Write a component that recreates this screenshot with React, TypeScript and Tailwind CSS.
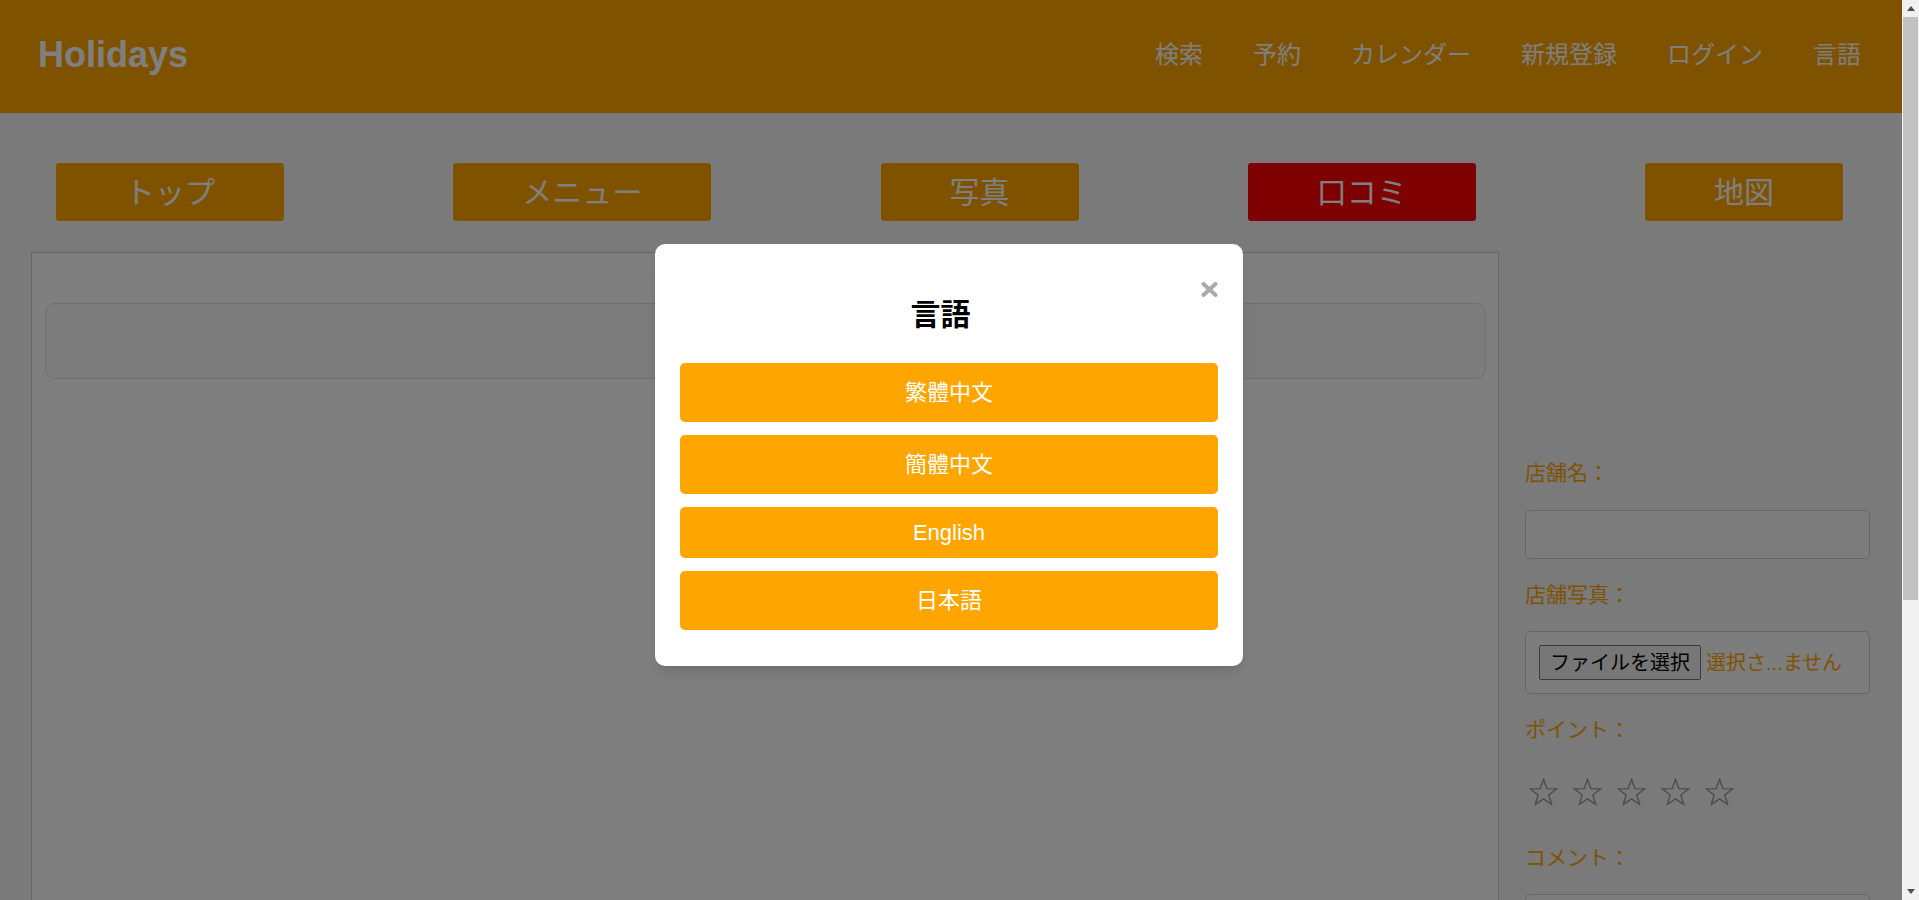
const navItems = ["検索", "予約", "カレンダー", "新規登録", "ログイン", "言語"];
const tabs = [
  { label: "トップ", active: false },
  { label: "メニュー", active: false },
  { label: "写真", active: false },
  { label: "口コミ", active: true },
  { label: "地図", active: false },
];
const languages = [
  { label: "繁體中文", h: "h-[59px]" },
  { label: "簡體中文", h: "h-[59px]" },
  { label: "English", h: "h-[51px]" },
  { label: "日本語", h: "h-[59px]" },
];

function Star() {
  return (
    <svg width="29" height="28" viewBox="0 0 29 28" fill="none">
      <polygon
        points="14.5,1.5 17.9,10.6 27.6,10.9 19.9,16.9 22.6,26.3 14.5,20.8 6.4,26.3 9.1,16.9 1.4,10.9 11.1,10.6"
        stroke="#999"
        strokeWidth="1.4"
        strokeLinejoin="miter"
      />
    </svg>
  );
}

function Label({ children, className = "" }: { children: React.ReactNode; className?: string }) {
  return <div className={`text-[21px] leading-[32px] h-[32px] pt-[2px] text-[#ffa500] ${className}`}>{children}</div>;
}

// drawn browser scrollbar, the page is taller than the window
function Scrollbar() {
  return (
    <div className="w-[17px] h-full bg-[#f1f1f1] flex flex-col items-center">
      <div className="h-[17px] w-full flex items-center justify-center">
        <svg width="8" height="5" viewBox="0 0 8 5"><polygon points="0,5 4,0 8,5" fill="#505050" /></svg>
      </div>
      <div className="w-[15px] h-[583px] bg-[#c1c1c1]" />
      <div className="flex-1" />
      <div className="h-[17px] w-full flex items-center justify-center">
        <svg width="8" height="5" viewBox="0 0 8 5"><polygon points="0,0 8,0 4,5" fill="#505050" /></svg>
      </div>
    </div>
  );
}

export default function App() {
  return (
    <div className="h-[900px] flex overflow-hidden font-['Liberation_Sans','Noto_Sans_CJK_JP',sans-serif]">
      <div className="relative flex-1 h-full overflow-hidden">
        <div className="min-h-[1340px] bg-[#f5f5f5]">
          {/* header */}
          <header className="h-[113px] bg-[#ffa500] flex items-center justify-between pl-[38px] pr-[41px] pb-[4px]">
            <h1 className="text-[36px] font-bold text-white leading-none">Holidays</h1>
            <nav className="flex gap-[50px] text-[24px] text-white">
              {navItems.map((n) => (
                <a key={n} className="cursor-pointer">{n}</a>
              ))}
            </nav>
          </header>

          {/* tabs */}
          <div className="flex justify-between pl-[56px] pr-[59px] pt-[50px]">
            {tabs.map((t) => (
              <button
                key={t.label}
                className={`h-[58px] px-[69px] rounded-[3px] text-[30px] text-white flex items-center justify-center ${
                  t.active ? "bg-[#ff0000]" : "bg-[#ffa500]"
                }`}
              >
                {t.label}
              </button>
            ))}
          </div>

          {/* main */}
          <div className="flex mt-[31px] pl-[31px] pb-[30px]">
            <div className="w-[1468px] h-[1058px] border border-[#cccccc] bg-white pl-[13px] pr-[12px] pt-[50px]">
              <div className="h-[76px] rounded-[10px] border border-[#e0e0e0] bg-[#f9f9f9]" />
            </div>

            <div className="flex-1 pl-[26px] pr-[32px] pt-[203px]">
              <Label>店舗名：</Label>
              <div className="mt-[23px] h-[49px] rounded-[5px] border border-[#cccccc] bg-[#fafafa]" />

              <Label className="mt-[18px]">店舗写真：</Label>
              <div className="mt-[22px] h-[63px] rounded-[5px] border border-[#cccccc] bg-[#fafafa] flex items-center pl-[13px]">
                <span className="h-[35px] px-[10px] flex items-center border border-[#767676] bg-[#efefef] rounded-[2px] text-[20px] text-black">
                  ファイルを選択
                </span>
                <span className="ml-[5px] text-[20px] text-[#ffa500]">選択さ...ません</span>
              </div>

              <Label className="mt-[18px]">ポイント：</Label>
              <div className="mt-[34px] flex gap-[15px] pl-[4px]">
                {[0, 1, 2, 3, 4].map((i) => (
                  <Star key={i} />
                ))}
              </div>

              <Label className="mt-[34px]">コメント：</Label>
              <div className="mt-[22px] h-[150px] rounded-[5px] border border-[#cccccc] bg-[#fafafa]" />
            </div>
          </div>
        </div>

        {/* language modal */}
        <div className="absolute inset-0 bg-black/50 flex justify-center items-start pt-[244px]">
          <div className="w-[588px] mr-[4px] bg-white rounded-[10px] shadow-lg px-[25px] pt-[38px] pb-[36px]">
            <div className="flex items-start">
              <h2 className="flex-1 text-center mt-[12px] text-[30px] leading-[41px] font-bold text-black">言語</h2>
              <svg width="17" height="15" viewBox="0 0 17 15" className="shrink-0 cursor-pointer">
                <path d="M2.5 2 L14.5 13 M14.5 2 L2.5 13" stroke="#aaaaaa" strokeWidth="4" strokeLinecap="round" />
              </svg>
            </div>
            <div className="mt-[28px] flex flex-col gap-[13px]">
              {languages.map((l) => (
                <button
                  key={l.label}
                  className={`${l.h} w-full rounded-[5px] bg-[#ffa500] text-white text-[22px] flex items-center justify-center`}
                >
                  {l.label}
                </button>
              ))}
            </div>
          </div>
        </div>
      </div>
      <Scrollbar />
    </div>
  );
}
